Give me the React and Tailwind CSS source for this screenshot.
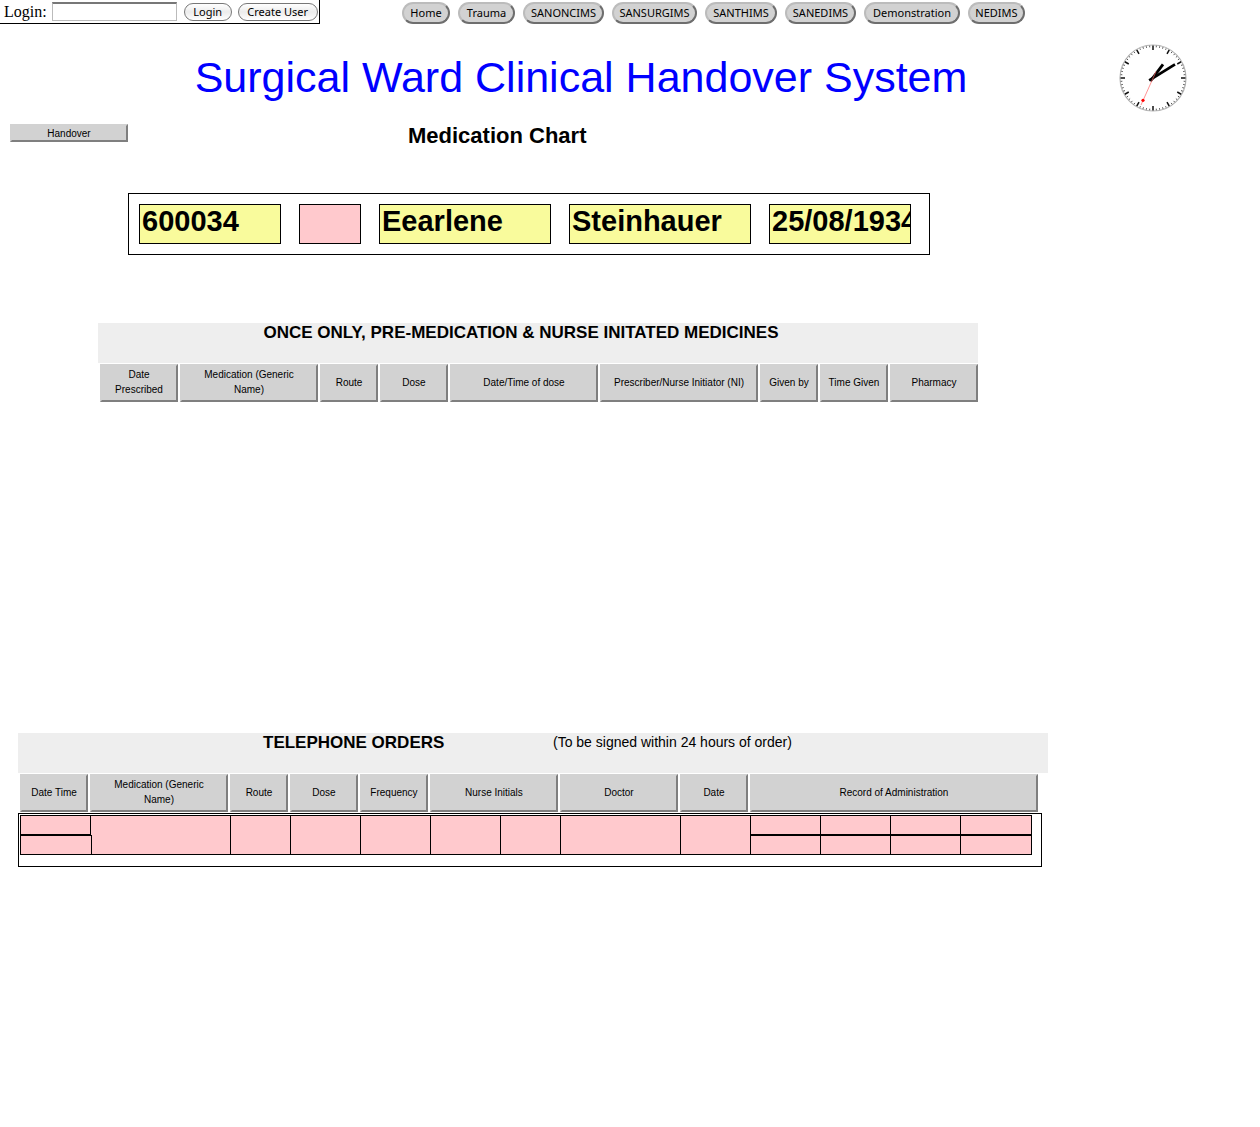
import React from "react";

const SYSTEMS = [
  { name: "Home", width: "w-[48px]" },
  { name: "Trauma", width: "w-[57px]" },
  { name: "SANONCIMS", width: "w-[81px]" },
  { name: "SANSURGIMS", width: "w-[85px]" },
  { name: "SANTHIMS", width: "w-[72px]" },
  { name: "SANEDIMS", width: "w-[71px]" },
  { name: "Demonstration", width: "w-[96px]" },
  { name: "NEDIMS", width: "w-[57px]" },
];

const PATIENT = [
  { label: "Patient number", value: "600034", style: "w-[142px] bg-[#f9fb9c]" },
  { label: "Title", value: "", style: "w-[62px] bg-[#ffc9cd]" },
  { label: "First name", value: "Eearlene", style: "w-[172px] bg-[#f9fb9c]" },
  { label: "Surname", value: "Steinhauer", style: "w-[182px] bg-[#f9fb9c]" },
  { label: "Date of birth", value: "25/08/1934", style: "w-[142px] bg-[#f9fb9c]" },
];

const ONCE_ONLY = [
  ["Date\nPrescribed", 80],
  ["Medication (Generic\nName)", 140],
  ["Route", 60],
  ["Dose", 70],
  ["Date/Time of dose", 150],
  ["Prescriber/Nurse Initiator (NI)", 160],
  ["Given by", 60],
  ["Time Given", 70],
  ["Pharmacy", 90],
];

const TELEPHONE = [
  ["Date Time", 70],
  ["Medication (Generic\nName)", 140],
  ["Route", 60],
  ["Dose", 70],
  ["Frequency", 70],
  ["Nurse Initials", 130],
  ["Doctor", 120],
  ["Date", 70],
  ["Record of Administration", 290],
];

const ORDER_COLUMNS = [72, 138, 60, 70, 70, 70, 60, 120, 70, 70, 70, 70, 72];
const ORDER_FIELDS = [
  "Medication",
  "Route",
  "Dose",
  "Frequency",
  "Nurse initials 1",
  "Nurse initials 2",
  "Doctor",
  "Date",
];

function Columns({ widths }) {
  const total = widths.reduce((a, b) => a + b, 0);
  return (
    <colgroup>
      {widths.map((w, i) => (
        <col key={i} style={{ width: `${(w / total) * 100}%` }} />
      ))}
    </colgroup>
  );
}

function HeadingTable({ columns, className }) {
  return (
    <table className={`mt-px w-full table-fixed border-separate border-spacing-0 ${className}`}>
      <Columns widths={columns.map((c) => c[1])} />
      <thead>
        <tr>
          {columns.map(([label]) => (
            <th key={label} scope="col" className="p-0 pl-[2px] font-normal">
              <div className="flex h-[38px] items-center justify-center border-2 border-t-[#d2d2d2] border-r-[#7f7f7f] border-b-[#7f7f7f] border-l-[#d2d2d2] bg-[#d2d2d2] pb-[2px] text-center text-[10px] leading-[15px] whitespace-pre-line">
                {label}
              </div>
            </th>
          ))}
        </tr>
      </thead>
    </table>
  );
}

function Clock() {
  return (
    <svg viewBox="-35 -35 70 70" className="size-[70px] shrink-0" role="img" aria-label="Clock">
      <circle r="33" fill="#fff" stroke="#b4b4b4" strokeWidth="1.2" />
      {Array.from({ length: 60 }, (_, i) => (
        <line
          key={i}
          y1={-32.5}
          y2={i % 5 === 0 ? -28 : -30.8}
          stroke={i % 5 === 0 ? "#111" : "#555"}
          strokeWidth={i % 5 === 0 ? 1.5 : 0.9}
          transform={`rotate(${i * 6})`}
        />
      ))}
      <line x1="-2.6" y1="3.2" x2="10" y2="-13.6" stroke="#000" strokeWidth="2.8" />
      <line x1="-3.8" y1="2.4" x2="22" y2="-13.6" stroke="#000" strokeWidth="2.8" />
      <line x1="3" y1="-6.5" x2="-12" y2="27" stroke="#f66" strokeWidth="0.7" />
      <circle cx="-10" cy="22.3" r="1.6" fill="#f00" />
    </svg>
  );
}

const loginButton =
  "h-[18px] rounded-full border border-[#777] bg-linear-to-b from-white via-[#ececec] to-white text-center font-['Noto_Sans',sans-serif] text-[11px] leading-[15px]";
const orderInput = "block w-full border-black bg-[#ffc9cd] outline-none";

export default function App() {
  return (
    <div className="min-h-screen bg-white font-['Liberation_Sans',Arial,sans-serif] text-black">
      <header className="flex items-start">
        <form
          className="flex h-[24px] w-[320px] items-center border-r border-b border-black pl-1"
          onSubmit={(e) => e.preventDefault()}
        >
          <label htmlFor="login" className="font-['Liberation_Serif',serif] text-[16px] leading-[20px]">
            Login:
          </label>
          <input
            id="login"
            className="ml-[5px] h-[19px] w-[125px] border border-t-2 border-[#bbb] border-t-[#777] bg-white px-1 text-[12px]"
          />
          <button type="submit" className={`${loginButton} ml-[7px] w-[48px]`}>
            Login
          </button>
          <button type="button" className={`${loginButton} ml-[6px] w-[80px]`}>
            Create User
          </button>
        </form>
        <nav className="ml-[82px] flex gap-2 pt-[2px]">
          {SYSTEMS.map((s) => (
            <button
              key={s.name}
              type="button"
              className={`${s.width} h-[22px] rounded-full border-2 border-t-[#bcbcbc] border-r-[#6e6e6e] border-b-[#6e6e6e] border-l-[#bcbcbc] bg-[#d2d2d2] text-center font-['Noto_Sans',sans-serif] text-[11px] leading-[18px] whitespace-nowrap`}
            >
              {s.name}
            </button>
          ))}
        </nav>
      </header>

      <div className="flex max-w-[1188px] items-start justify-between pt-[19px]">
        <h1 className="flex-1 pt-[9px] pl-[44px] text-center text-[43px] leading-[50px] text-[#0000ff]">
          Surgical Ward Clinical Handover System
        </h1>
        <Clock />
      </div>

      <div className="flex items-start pl-[10px]">
        <button
          type="button"
          className="mt-[11px] h-[18px] w-[118px] border-2 border-t-[#d2d2d2] border-r-[#7f7f7f] border-b-[#7f7f7f] border-l-[#d2d2d2] bg-[#d2d2d2] text-[10px] leading-[15px]"
        >
          Handover
        </button>
        <h2 className="ml-[280px] pt-[10px] text-[22px] leading-[26px] font-bold">Medication Chart</h2>
      </div>

      <section
        aria-label="Patient"
        className="mt-[44px] ml-[128px] flex max-w-[802px] gap-[18px] border border-black p-[10px]"
      >
        {PATIENT.map((f) => (
          <input
            key={f.label}
            aria-label={f.label}
            readOnly
            defaultValue={f.value}
            className={`${f.style} h-[40px] border border-black pb-[6px] pl-[2px] text-[29px] leading-[32px] font-bold outline-none`}
          />
        ))}
      </section>

      <section className="mt-[68px] ml-[98px] min-h-[410px] max-w-[880px]">
        <h3 className="h-[40px] bg-[#eee] pr-[34px] text-center text-[17px] leading-[20px] font-bold">
          ONCE ONLY, PRE-MEDICATION &amp; NURSE INITATED MEDICINES
        </h3>
        <HeadingTable columns={ONCE_ONLY} className="max-w-[880px]" />
      </section>

      <section className="ml-[18px] max-w-[1030px]">
        <div className="flex h-[40px] bg-[#eee] pl-[245px]">
          <h3 className="w-[290px] text-[17px] leading-[20px] font-bold">TELEPHONE ORDERS</h3>
          <p className="text-[14px] leading-[18px]">(To be signed within 24 hours of order)</p>
        </div>
        <HeadingTable columns={TELEPHONE} className="max-w-[1020px]" />
        <div className="mt-px max-w-[1024px] border border-black pt-px pr-[9px] pb-[11px] pl-px">
          <table aria-label="Telephone orders" className="w-full table-fixed border-separate border-spacing-0">
            <Columns widths={ORDER_COLUMNS} />
            <tbody>
              <tr>
                <td className="border-t border-black bg-[#ffc9cd] p-0">
                  <input aria-label="Date" className={`${orderInput} h-[19px] max-w-[71px] border-x border-b`} />
                </td>
                {ORDER_FIELDS.map((f, i) => (
                  <td key={f} rowSpan={2} className="p-0">
                    <input
                      aria-label={f}
                      className={`${orderInput} h-[40px] border-y ${i > 0 ? "border-l" : ""}`}
                    />
                  </td>
                ))}
                {[1, 2, 3, 4].map((n) => (
                  <td key={n} className="p-0">
                    <input
                      aria-label={`Administration date ${n}`}
                      className={`${orderInput} h-[20px] border-y border-l ${n === 4 ? "border-r" : ""}`}
                    />
                  </td>
                ))}
              </tr>
              <tr>
                <td className="p-0">
                  <input aria-label="Time" className={`${orderInput} h-[20px] border`} />
                </td>
                {[1, 2, 3, 4].map((n) => (
                  <td key={n} className="p-0">
                    <input
                      aria-label={`Administration time ${n}`}
                      className={`${orderInput} h-[20px] border-y border-l ${n === 4 ? "border-r" : ""}`}
                    />
                  </td>
                ))}
              </tr>
            </tbody>
          </table>
        </div>
      </section>
    </div>
  );
}
